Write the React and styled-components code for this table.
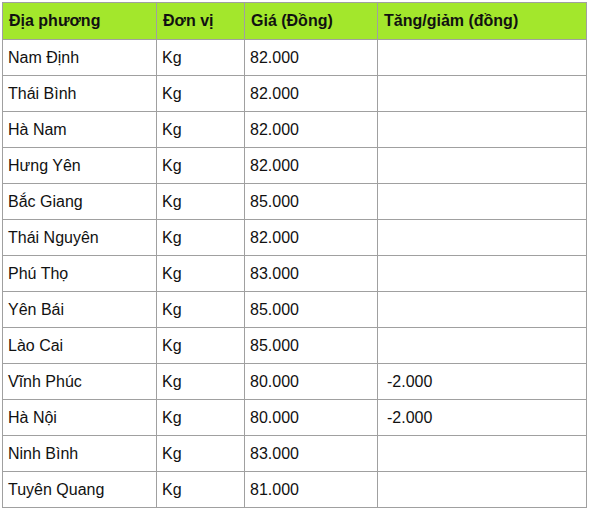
import React from 'react'
import styled, { createGlobalStyle } from 'styled-components'

const GlobalStyle = createGlobalStyle`
  body {
    margin: 0;
    background: #fff;
    font-family: "Liberation Sans", Arial, sans-serif;
  }
`

const Wrap = styled.div`
  padding: 2px 0 0 2px;
`

const Table = styled.table`
  border-collapse: collapse;
  table-layout: fixed;
  width: 585px;
  font-size: 16px;
  color: #111;
`

const HeadCell = styled.th`
  background: #a3e72c;
  border: 1px solid #a0a0a0;
  height: 37px;
  padding: 0 6px;
  text-align: left;
  font-weight: bold;
  box-sizing: border-box;
`

const Cell = styled.td`
  border: 1px solid #a0a0a0;
  height: 36px;
  padding: 0 ${p => p.$pad || 5}px;
  box-sizing: border-box;
  vertical-align: middle;
`

const rows = [
  ['Nam Định', '82.000', ''],
  ['Thái Bình', '82.000', ''],
  ['Hà Nam', '82.000', ''],
  ['Hưng Yên', '82.000', ''],
  ['Bắc Giang', '85.000', ''],
  ['Thái Nguyên', '82.000', ''],
  ['Phú Thọ', '83.000', ''],
  ['Yên Bái', '85.000', ''],
  ['Lào Cai', '85.000', ''],
  ['Vĩnh Phúc', '80.000', '-2.000'],
  ['Hà Nội', '80.000', '-2.000'],
  ['Ninh Bình', '83.000', ''],
  ['Tuyên Quang', '81.000', ''],
]

const App = () => (
  <>
    <GlobalStyle />
    <Wrap>
      <Table>
        <colgroup>
          <col style={{ width: 154 }} />
          <col style={{ width: 88 }} />
          <col style={{ width: 133 }} />
          <col style={{ width: 209 }} />
        </colgroup>
        <thead>
          <tr>
            <HeadCell>Địa phương</HeadCell>
            <HeadCell>Đơn vị</HeadCell>
            <HeadCell>Giá (Đồng)</HeadCell>
            <HeadCell>Tăng/giảm (đồng)</HeadCell>
          </tr>
        </thead>
        <tbody>
          {rows.map(([place, price, change]) => (
            <tr key={place}>
              <Cell>{place}</Cell>
              <Cell>{'Kg'}</Cell>
              <Cell>{price}</Cell>
              <Cell $pad={9}>{change}</Cell>
            </tr>
          ))}
        </tbody>
      </Table>
    </Wrap>
  </>
)

export default App
